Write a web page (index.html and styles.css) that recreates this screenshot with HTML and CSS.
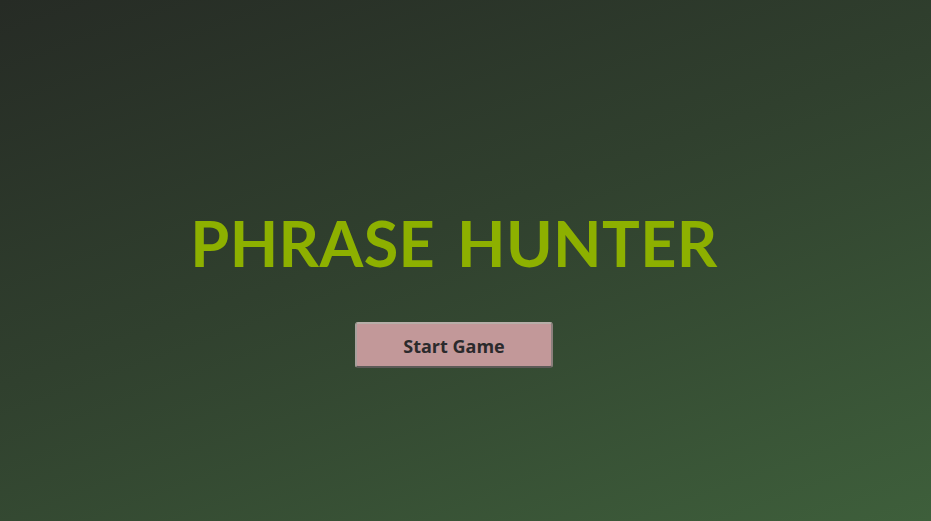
FILE: index.html
```html
<!DOCTYPE html>
<html>
<head>
<meta charset="utf-8">
<link rel="stylesheet" href="styles.css">
</head>
<body>
<main class="overlay">
  <h1 class="title">PHRASE HUNTER</h1>
  <button class="start-btn">Start Game</button>
</main>
</body>
</html>
```
FILE: styles.css
```css
html, body {
  margin: 0;
  height: 100%;
}
body {
  background: linear-gradient(160deg, #262b25 0%, #30402e 45%, #3e5f3b 100%);
}
.overlay {
  height: 100%;
  box-sizing: border-box;
  display: flex;
  flex-direction: column;
  align-items: center;
  padding-top: 206px;
  padding-right: 23px;
}
.title {
  margin: 0;
  font-family: "Comic Sans MS", Lato, "DejaVu Sans", sans-serif;
  font-weight: 700;
  font-size: 63px;
  line-height: 74px;
  color: #8db000;
  letter-spacing: 0.4px;
  word-spacing: 6px;
}
.start-btn {
  margin-top: 42px;
  width: 198px;
  height: 46px;
  padding: 2px 0 0;
  background: #c29899;
  border: 2px solid;
  border-color: #b7aea8 #8b7f7c #5c5a57 #a8a09c;
  border-radius: 3px;
  font-family: "Open Sans", "Noto Sans", sans-serif;
  font-weight: 700;
  font-size: 18px;
  color: #2b2a2c;
  cursor: pointer;
}
```
